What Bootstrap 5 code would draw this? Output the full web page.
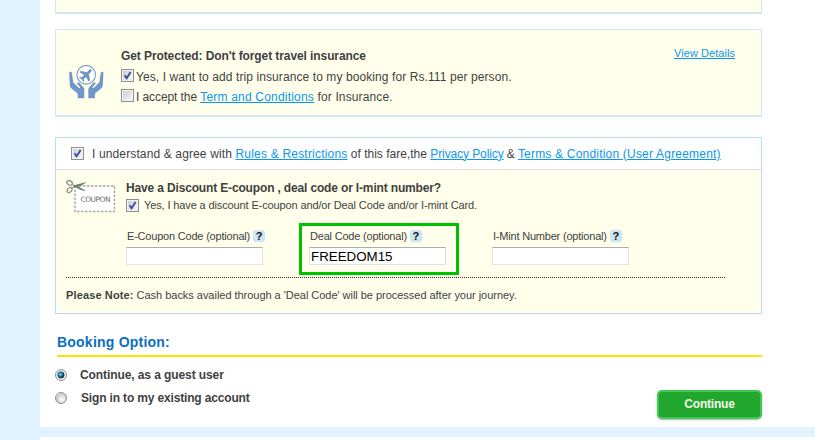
<!DOCTYPE html>
<html lang="en">
<head>
<meta charset="UTF-8">
<meta name="viewport" content="width=device-width, initial-scale=1.0">
<title>Booking - Review and Continue</title>
<link rel="stylesheet" href="https://cdn.jsdelivr.net/npm/bootstrap@5.3.0/dist/css/bootstrap.min.css">
<style>
    body {
        background-color: #e1f3ff;
        color: #3f3f3f;
        font-family: "Liberation Sans", Arial, sans-serif;
        font-size: 12px;
        line-height: 16px;
        overflow: hidden;
    }
    a { color: #0a97ee; }
    a:hover { color: #0670b5; }

    .page-panel {
        margin-left: 40px;
        padding: 0 53px 0 15px;
        height: 427px;
    }
    .next-panel {
        margin: 10px 0 0 40px;
        height: 20px;
    }
    .cream-box {
        background-color: #ffffec;
        border: 1px solid #d2e8f3;
        border-bottom-width: 2px;
    }
    .box-top { height: 14px; border-top: 0; }
    .insurance-box {
        margin-top: 15px;
        height: 88px;
        padding: 18px 26px 0 13px;
    }
    .hands-icon { margin-top: 17px; }
    .insurance-text { margin-left: 17px; }
    .insurance-row { height: 20px; padding-top: 1px; gap: 2px; }
    .details-link { margin-top: -1px; font-size: 11px; line-height: 13px; letter-spacing: .05px; }

    /* checkboxes and radios in the old Windows look */
    .check-win, .radio-win {
        appearance: none;
        flex: none;
        width: 13px;
        height: 13px;
        margin: 0;
        border: 1px solid #8e8f8f;
    }
    .check-win {
        background: linear-gradient(135deg, #cbcfd5, #f6f6f6) center / 9px 9px no-repeat #f4f4f4;
    }
    .check-win:checked {
        background: url("data:image/svg+xml,%3Csvg xmlns='http://www.w3.org/2000/svg' viewBox='0 0 11 11'%3E%3Cpath d='M2.6 5.2 4.6 8.2 8.6 2' fill='none' stroke='%233d4f96' stroke-width='1.9'/%3E%3C/svg%3E") center / 11px 11px no-repeat,
                    linear-gradient(135deg, #cbcfd5, #f6f6f6) center / 9px 9px no-repeat #f4f4f4;
    }
    .radio-win {
        width: 12px;
        height: 12px;
        border-radius: 50%;
        background: radial-gradient(circle at 60% 65%, #f5f5f5 15%, #c4c6c9 65%, #f4f4f4 75%);
    }
    .radio-win:checked {
        background: radial-gradient(circle 5px at 4.4px 4.4px, #8fdcf5 0, #1d79a8 40%, transparent 65%),
                    radial-gradient(circle 5px at 5px 5px, #12324c 60%, #eceff1 78%);
    }

    .fare-box {
        margin-top: 20px;
        height: 177px;
        border: 1px solid #b5dcfa;
        background-color: #ffffec;
    }
    .fare-agree {
        height: 32px;
        padding-left: 15px;
        border-bottom: 1px solid #d9dee0;
    }
    .agree-text { margin-left: 8px; white-space: pre; }
    .coupon-area { padding: 10px 36px 0 10px; }
    .coupon-text { margin-left: 10px; }
    .coupon-check { margin-top: 1px; gap: 5px; }
    .code-fields { margin-top: 10px; padding-left: 51px; }
    .code-field {
        width: 160px;
        height: 52px;
        margin-right: 23px;
        padding: 3px 0 0 7px;
        border: 3px solid transparent;
        border-left-width: 4px;
    }
    .code-field:first-child { width: 182px; margin-right: 0; padding-left: 6px; }
    .code-field.highlight { border: 3px solid #00c100; padding-left: 8px; }
    .code-field label { line-height: 14px; font-size: 11px; }
    .help-tip {
        width: 12px;
        height: 12px;
        margin-left: 3px;
        border-radius: 3px;
        background-color: #cbe6f5;
        color: #111;
        font-size: 11px;
        line-height: 12px;
    }
    .code-input {
        display: block;
        width: 137px;
        height: 18px;
        margin: 4px 0 0 -1px;
        padding: 0 1px;
        border: 1px solid #dfe1ec;
        border-top-color: #abadb3;
        font-size: 13.33px;
        line-height: 16px;
        color: #000;
        background-color: #fff;
    }
    .dotted-rule { margin-top: 2px; border-top: 1px dotted #333; }
    .fine { font-size: 11px; }
    .note-line { margin-top: 9px; letter-spacing: -.03px; }

    .option-title {
        margin: 19px 0 0 2px;
        height: 24px;
        border-bottom: 2px solid #fce300;
        color: #0b6fc2;
        font-size: 14px;
        line-height: 19px;
        letter-spacing: .22px;
    }
    .option-list { padding-top: 10px; }
    .option-row { height: 23px; gap: 13px; }
    .option-row + .option-row { gap: 14px; }
    .option-row .radio-win { margin-top: 2px; }
    .btn-continue {
        width: 105px;
        height: 29px;
        margin-top: 33px;
        padding: 0;
        border: 2px solid #41c852;
        border-radius: 5px;
        background-color: #22a72e;
        color: #f2f8ea;
        font-size: 12px;
        font-weight: 700;
        line-height: 25px;
        letter-spacing: -.2px;
        box-shadow: 0 1px 2px rgba(0, 0, 0, .3);
    }

    /* per-line tracking */
    .tr-a { letter-spacing: -.09px; }
    .tr-b { letter-spacing: .09px; }
    .tr-c { letter-spacing: .13px; }
    .tr-d { letter-spacing: .2px; }
    .tr-e { letter-spacing: -.155px; }
    .tr-f { letter-spacing: -.125px; }
    .tr-g { letter-spacing: -.2px; }
    .tr-h { letter-spacing: -.16px; }
</style>
</head>
<body>

<div class="page-panel bg-white">
    <div class="cream-box box-top"></div>

    <!-- Travel insurance -->
    <div class="cream-box insurance-box d-flex align-items-start">
        <svg class="hands-icon flex-shrink-0" width="35" height="34" viewBox="0 0 35 34">
            <circle cx="17.2" cy="9.8" r="9.3" fill="#fff" fill-opacity=".6" stroke="#7c9dcc" stroke-width="1.1"/>
            <path transform="translate(17.2 9.8) rotate(45)" fill="#6f94c8" d="M0-7.5C1-7.5 1.4-6.2 1.4-5V-2.3L6.5 1V3L1.4 1.6V4.7L3 6V7.2L0 6.4-3 7.2V6L-1.4 4.7V1.6L-6.5 3V1L-1.4-2.3V-5C-1.4-6.2-1-7.5 0-7.5Z"/>
            <g id="hand" fill="#7096cb">
                <path d="M.2 7.2C1.2 6.5 2.6 6.8 2.9 8.2L4.2 17.2 9.7 22.8C10.5 23.5 11.5 22.8 11 21.9L8 18.4C8 17.4 9.5 17.2 10.3 17.8L14.2 22.1C15 23 15.3 24 15.3 25.2V33.2H8.7V29.8C8.6 28.5 8 27.7 6.9 26.9L3 23.9C1.6 22.8 1 21.6.8 20Z"/>
            </g>
            <use href="#hand" transform="matrix(-1 0 0 1 34.6 0)"/>
        </svg>
        <div class="insurance-text">
            <div class="fw-bold tr-a">Get Protected: Don't forget travel insurance</div>
            <label class="insurance-row d-flex mt-1">
                <input type="checkbox" class="check-win" checked>
                <span class="tr-b">Yes, I want to add trip insurance to my booking for Rs.111 per person.</span>
            </label>
            <div class="insurance-row d-flex">
                <input type="checkbox" class="check-win">
                <span><span class="tr-a">I accept the </span><a href="#" class="tr-d">Term and Conditions</a><span class="tr-c"> for Insurance.</span></span>
            </div>
        </div>
        <a href="#" class="details-link ms-auto">View Details</a>
    </div>

    <!-- Fare rules and discount codes -->
    <div class="fare-box">
        <div class="fare-agree d-flex align-items-center bg-white">
            <input type="checkbox" class="check-win" checked>
            <div class="agree-text"><span class="tr-c">I understand &amp; agree with </span><a href="#" class="tr-d">Rules &amp; Restrictions</a> of this fare,the <a href="#" class="tr-a">Privacy Policy</a><span class="tr-h"> &amp; </span><a href="#" class="tr-d">Terms &amp; Condition (User Agreement)</a></div>
        </div>
        <div class="coupon-area">
            <div class="d-flex align-items-start">
                <svg class="flex-shrink-0" width="50" height="33" viewBox="0 0 50 33">
                    <rect x="9" y="6" width="39.5" height="25.5" fill="#fff" stroke="#a5a5a5" stroke-width="1.4" stroke-dasharray="2.6 1.4"/>
                    <g fill="none" stroke="#8b8f8c" stroke-width="1.3">
                        <ellipse cx="3.6" cy="2.9" rx="3" ry="2.1" transform="rotate(30 3.6 2.9)"/>
                        <ellipse cx="3.6" cy="10" rx="2.8" ry="2.1" transform="rotate(-50 3.6 10)"/>
                    </g>
                    <path d="M5.6 4.2 10 5.2 20 10.7C16 11 12 9 9 7ZM5 8.2 10 4.8 20.5 2C18 4.5 14 6.3 10 7.2Z" fill="#65816b"/>
                    <text x="14.5" y="22" font-family="DejaVu Sans, sans-serif" font-size="7.4" textLength="30" fill="#6a6a6a">COUPON</text>
                </svg>
                <div class="coupon-text">
                    <div class="fw-bold tr-e">Have a Discount E-coupon , deal code or I-mint number?</div>
                    <label class="coupon-check d-flex align-items-center">
                        <input type="checkbox" class="check-win" checked>
                        <span class="fine tr-f">Yes, I have a discount E-coupon and/or Deal Code and/or I-mint Card.</span>
                    </label>
                </div>
            </div>
            <div class="code-fields d-flex">
                <div class="code-field">
                    <label class="d-flex align-items-center" for="ecoupon"><span class="tr-g">E-Coupon Code (optional)</span><span class="help-tip fw-bold text-center">?</span></label>
                    <input type="text" id="ecoupon" class="code-input">
                </div>
                <div class="code-field highlight">
                    <label class="d-flex align-items-center" for="dealcode"><span class="tr-g">Deal Code (optional)</span><span class="help-tip fw-bold text-center">?</span></label>
                    <input type="text" id="dealcode" class="code-input" value="FREEDOM15">
                </div>
                <div class="code-field">
                    <label class="d-flex align-items-center" for="imint"><span class="tr-g">I-Mint Number (optional)</span><span class="help-tip fw-bold text-center">?</span></label>
                    <input type="text" id="imint" class="code-input">
                </div>
            </div>
            <div class="dotted-rule"></div>
            <div class="fine note-line"><b class="tr-c">Please Note:</b> Cash backs availed through a 'Deal Code' will be processed after your journey.</div>
        </div>
    </div>

    <!-- Booking option -->
    <h2 class="option-title fw-bold">Booking Option:</h2>
    <div class="d-flex justify-content-between align-items-start">
        <div class="option-list fw-bold">
            <label class="option-row d-flex">
                <input type="radio" name="account" class="radio-win" checked>
                <span class="tr-a">Continue, as a guest user</span>
            </label>
            <label class="option-row d-flex">
                <input type="radio" name="account" class="radio-win">
                <span class="tr-h">Sign in to my existing account</span>
            </label>
        </div>
        <button type="button" class="btn btn-continue">Continue</button>
    </div>
</div>
<div class="next-panel bg-white"></div>

<script src="https://cdn.jsdelivr.net/npm/bootstrap@5.3.0/dist/js/bootstrap.bundle.min.js"></script>
</body>
</html>
